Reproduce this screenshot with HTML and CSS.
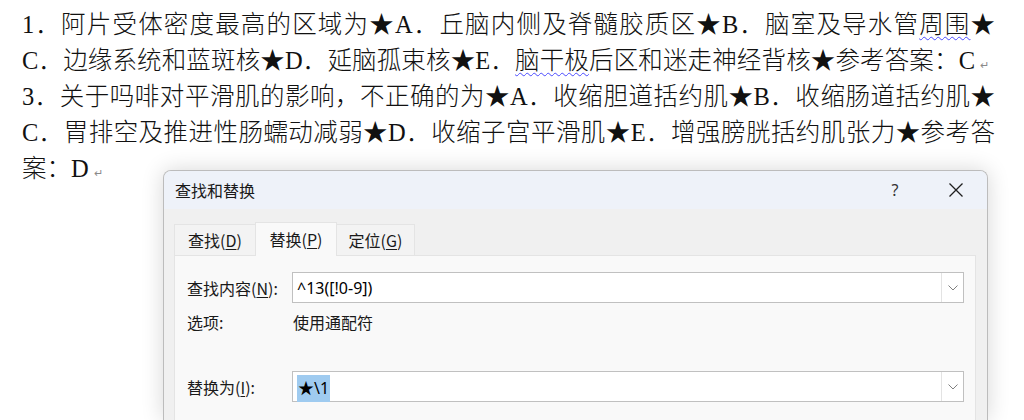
FILE: index.html
```html
<!DOCTYPE html>
<html lang="zh-CN">
<head>
<meta charset="utf-8">
<title>查找和替换</title>
<link rel="stylesheet" href="styles.css">
</head>
<body>
<div class="doc">
  <div class="ln"><span class="jt w973">1．阿片受体密度最高的区域为★A．丘脑内侧及脊髓胶质区★B．脑室及导水管<span class="wavy">周围</span>★</span></div>
  <div class="ln"><span class="jt w953">C．边缘系统和蓝斑核★D．延脑孤束核★E．<span class="wavy">脑干极</span>后区和迷走神经背核★参考答案：C</span><span class="pm">↵</span></div>
  <div class="ln"><span class="jt w973">3．关于吗啡对平滑肌的影响，不正确的为★A．收缩胆道括约肌★B．收缩肠道括约肌★</span></div>
  <div class="ln"><span class="jt w973">C．胃排空及推进性肠蠕动减弱★D．收缩子宫平滑肌★E．增强膀胱括约肌张力★参考答</span></div>
  <div class="ln"><span>案：D</span><span class="pm">↵</span></div>
</div>

<div class="dialog">
  <div class="titlebar">
    <span class="title">查找和替换</span>
    <span class="help">?</span>
    <span class="close">
      <svg width="16" height="16" viewBox="0 0 16 16"><path d="M1.5 1.5 L14.5 14.5 M14.5 1.5 L1.5 14.5" stroke="#1f1f1f" stroke-width="1.3" fill="none"/></svg>
    </span>
  </div>
  <div class="body">
    <div class="tabs">
      <div class="tab t1">查找(<u>D</u>)</div>
      <div class="tab t2 active">替换(<u>P</u>)</div>
      <div class="tab t3">定位(<u>G</u>)</div>
    </div>
    <div class="panel">
      <div class="row">
        <span class="label">查找内容(<u>N</u>):</span>
        <div class="combo">
          <span class="val">^13([!0-9])</span>
          <span class="drop"><svg width="10" height="6" viewBox="0 0 10 6"><path d="M0.5 0.5 L5 5 L9.5 0.5" stroke="#808080" stroke-width="1" fill="none"/></svg></span>
        </div>
      </div>
      <div class="row opt">
        <span class="label">选项:</span>
        <span class="optval">使用通配符</span>
      </div>
      <div class="row rep">
        <span class="label">替换为(<u>I</u>):</span>
        <div class="combo">
          <span class="val"><span class="sel">★\1</span></span>
          <span class="drop"><svg width="10" height="6" viewBox="0 0 10 6"><path d="M0.5 0.5 L5 5 L9.5 0.5" stroke="#808080" stroke-width="1" fill="none"/></svg></span>
        </div>
      </div>
    </div>
  </div>
</div>
</body>
</html>
```
FILE: styles.css
```css
html, body {
  margin: 0;
  padding: 0;
  background: #ffffff;
  overflow: hidden;
}
body {
  width: 1024px;
  height: 420px;
  position: relative;
}
.doc {
  padding: 7px 0 0 22px;
  font-family: "Liberation Serif", "Noto Sans CJK SC", serif;
  font-size: 24.5px;
  font-weight: 300;
  color: #111;
  line-height: 36px;
}
.ln {
  display: flex;
  align-items: baseline;
  white-space: nowrap;
  height: 36px;
}
.jt {
  display: inline-block;
  text-align: justify;
  text-align-last: justify;
}
.w973 { width: 973px; }
.w953 { width: 953px; }
.wavy {
  text-decoration: underline wavy #4a4aff;
  text-decoration-thickness: 1px;
  text-underline-offset: 3px;
}
.pm {
  font-family: "DejaVu Sans", sans-serif;
  font-size: 11px;
  color: #8a8a8a;
  margin-left: 5px;
}

.dialog {
  position: absolute;
  left: 163px;
  top: 170px;
  width: 823px;
  height: 249px;
  border: 1px solid #bcbcbc;
  border-bottom: none;
  border-radius: 8px 8px 0 0;
  background: #f0f0f0;
  box-shadow: 0 0 22px rgba(0, 0, 0, 0.16);
  overflow: hidden;
  font-family: "Noto Sans CJK SC", "Noto Sans", sans-serif;
  font-size: 16px;
  color: #1a1a1a;
}
.titlebar {
  height: 38px;
  background: #eef2f9;
  display: flex;
  align-items: center;
  padding-left: 11px;
}
.title {
  flex: 1;
}
.help {
  font-family: "Noto Sans", sans-serif;
  font-size: 16px;
  color: #333;
  width: 20px;
  text-align: center;
  margin-right: 43px;
}
.close {
  display: flex;
  width: 16px;
  height: 16px;
  margin-right: 23px;
}
.body {
  padding: 13px 11px 0 10px;
}
.tabs {
  display: flex;
  align-items: flex-end;
  height: 33px;
}
.tab {
  height: 31px;
  box-sizing: border-box;
  background: #f3f3f3;
  border: 1px solid #e4e4e4;
  border-bottom: none;
  display: flex;
  align-items: center;
  justify-content: center;
  padding-bottom: 1px;
}
.tab u, .label u {
  text-underline-offset: 2px;
}
.t1 { width: 81px; border-right: none; }
.t2 { width: 82px; }
.t3 { width: 78px; border-left: none; }
.tab.active {
  height: 34px;
  background: #f9f9f9;
  border-color: #e4e4e4;
  margin-bottom: -1px;
  position: relative;
  z-index: 1;
  padding-bottom: 2px;
}
.panel {
  background: #f9f9f9;
  border: 1px solid #e4e4e4;
  height: 180px;
  padding: 16px 11px 0 12px;
}
.row {
  display: grid;
  grid-template-columns: 105px 1fr;
  align-items: center;
}
.label {
  white-space: nowrap;
}
.combo {
  height: 31px;
  box-sizing: border-box;
  border: 1px solid #c0c0c0;
  background: #fff;
  display: flex;
  align-items: center;
}
.val {
  flex: 1;
  padding-left: 4px;
  font-family: "Noto Sans", "Noto Sans CJK SC", sans-serif;
  font-size: 16px;
  color: #000;
}
.sel {
  background: #9fcbf0;
  padding: 2px 1px 3px 1px;
}
.drop {
  width: 22px;
  height: 29px;
  box-sizing: border-box;
  border-left: 1px solid #e3e3e3;
  display: flex;
  align-items: center;
  justify-content: center;
}
.opt {
  margin-top: 7px;
  height: 22px;
}
.optval {
  padding-left: 1px;
}
.rep {
  margin-top: 39px;
}
```
